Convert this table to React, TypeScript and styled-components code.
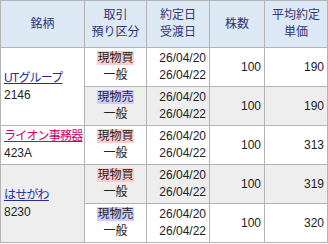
import * as React from 'react';
import styled, { createGlobalStyle } from 'styled-components';

type Side = 'buy' | 'sell';

interface ITrade {
  side: Side;
  account: string;
  tradeDate: string;
  settleDate: string;
  qty: string;
  price: string;
}

interface IStock {
  name: string;
  code: string;
  visited?: boolean;
  trades: ITrade[];
}

const stocks: IStock[] = [
  {
    name: 'UTグループ',
    code: '2146',
    trades: [
      { side: 'buy', account: '一般', tradeDate: '26/04/20', settleDate: '26/04/22', qty: '100', price: '190' },
      { side: 'sell', account: '一般', tradeDate: '26/04/20', settleDate: '26/04/22', qty: '100', price: '190' },
    ],
  },
  {
    name: 'ライオン事務器',
    code: '423A',
    visited: true,
    trades: [
      { side: 'buy', account: '一般', tradeDate: '26/04/20', settleDate: '26/04/22', qty: '100', price: '313' },
    ],
  },
  {
    name: 'はせがわ',
    code: '8230',
    trades: [
      { side: 'buy', account: '一般', tradeDate: '26/04/20', settleDate: '26/04/22', qty: '100', price: '319' },
      { side: 'sell', account: '一般', tradeDate: '26/04/20', settleDate: '26/04/22', qty: '100', price: '320' },
    ],
  },
];

const GlobalStyle = createGlobalStyle`
  body {
    margin: 0;
    background: #ffffff;
  }
`;

const TableElm = styled.table`
  border-collapse: collapse;
  table-layout: fixed;
  width: 327px;
  font-family: "Liberation Sans", "Noto Sans CJK JP", sans-serif;
  font-size: 12px;
  line-height: 17px;
  color: #222222;

  td, th {
    border: 1px solid #b4b4b4;
    padding: 0;
  }
`;

const HeadCell = styled.th`
  height: 46px;
  background: #dde9f5;
  color: #333377;
  font-weight: normal;
  text-align: center;
  vertical-align: middle;
`;

const Cell = styled.td<{ $shaded?: boolean; $align?: 'left' | 'center' | 'right' }>`
  height: 38px;
  background: ${(p) => (p.$shaded ? '#eeeeee' : '#ffffff')};
  text-align: ${(p) => p.$align || 'left'};
  vertical-align: middle;
  padding: 0 3px 0 3px !important;
  white-space: nowrap;
  overflow: hidden;
`;

const NameLink = styled.a<{ $visited?: boolean }>`
  color: ${(p) => (p.$visited ? '#cc0066' : '#1f2f9f')};
  text-decoration: underline;
  letter-spacing: -0.8px;
`;

const Badge = styled.span<{ $side: Side }>`
  display: inline-block;
  line-height: 14px;
  background: ${(p) => (p.$side === 'buy' ? '#ffcccc' : '#ccccff')};
  color: #222222;
`;

const Line = styled.div`
  display: block;
`;

const App = () => {
  let rowIndex = 0;

  return (
    <>
      <GlobalStyle />
      <TableElm>
        <colgroup>
          <col style={{ width: 84 }} />
          <col style={{ width: 62 }} />
          <col style={{ width: 63 }} />
          <col style={{ width: 55 }} />
          <col style={{ width: 63 }} />
        </colgroup>
        <thead>
          <tr>
            <HeadCell>銘柄</HeadCell>
            <HeadCell>取引<br />預り区分</HeadCell>
            <HeadCell>約定日<br />受渡日</HeadCell>
            <HeadCell>株数</HeadCell>
            <HeadCell>平均約定<br />単価</HeadCell>
          </tr>
        </thead>
        <tbody>
          {stocks.map((stock) =>
            stock.trades.map((trade, i) => {
              const shaded = rowIndex % 2 === 1;
              rowIndex += 1;
              return (
                <tr key={`${stock.code}-${i}`}>
                  {i === 0 && (
                    <Cell $shaded={shaded} rowSpan={stock.trades.length}>
                      <Line>
                        <NameLink href="#" $visited={stock.visited}>{stock.name}</NameLink>
                      </Line>
                      <Line>{stock.code}</Line>
                    </Cell>
                  )}
                  <Cell $shaded={shaded} $align="center">
                    <Line>
                      <Badge $side={trade.side}>{trade.side === 'buy' ? '現物買' : '現物売'}</Badge>
                    </Line>
                    <Line>{trade.account}</Line>
                  </Cell>
                  <Cell $shaded={shaded} $align="right">
                    <Line>{trade.tradeDate}</Line>
                    <Line>{trade.settleDate}</Line>
                  </Cell>
                  <Cell $shaded={shaded} $align="right">{trade.qty}</Cell>
                  <Cell $shaded={shaded} $align="right">{trade.price}</Cell>
                </tr>
              );
            })
          )}
        </tbody>
      </TableElm>
    </>
  );
};

export default App;
